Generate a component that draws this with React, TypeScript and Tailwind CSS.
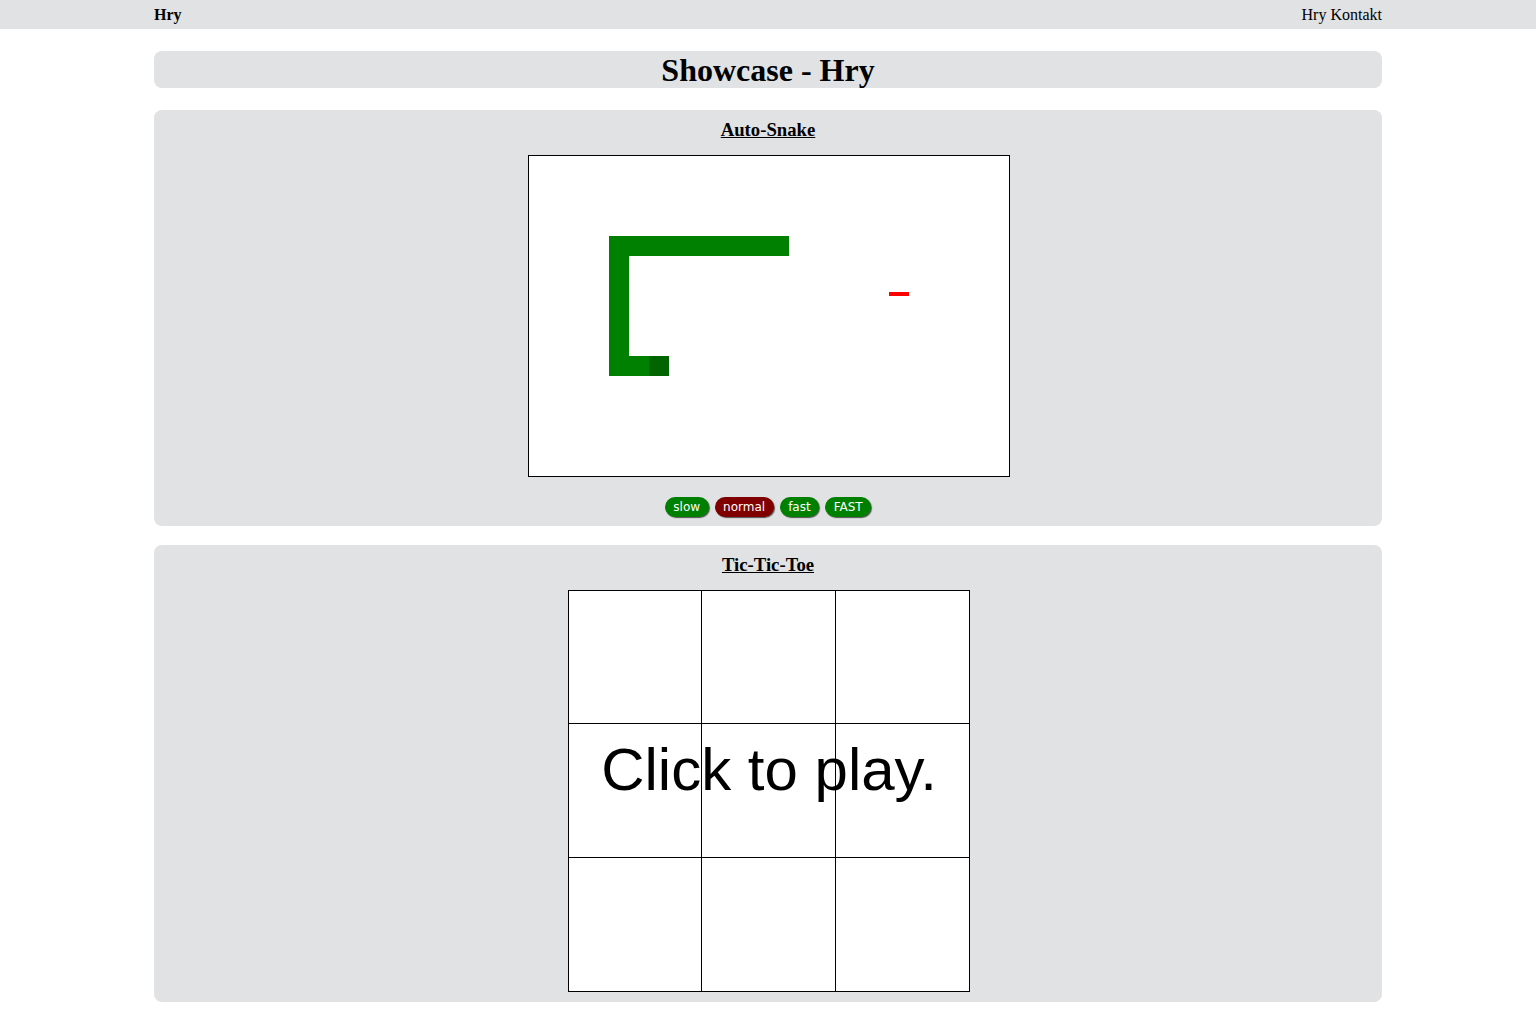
import React from "react";

const serif = { fontFamily: '"Liberation Serif", "Times New Roman", serif' };

const speeds = [
  { label: "slow", active: false },
  { label: "normal", active: true },
  { label: "fast", active: false },
  { label: "FAST", active: false },
];

function SnakeBoard() {
  return (
    <div className="w-[482px] h-[322px] border border-black bg-white">
      <svg width="480" height="320" viewBox="0 0 480 320" className="block">
        <rect x="80" y="80" width="180" height="20" fill="#008000" />
        <rect x="80" y="100" width="20" height="120" fill="#008000" />
        <rect x="100" y="200" width="20" height="20" fill="#008000" />
        <rect x="120" y="200" width="20" height="20" fill="#006400" />
        <rect x="360" y="136" width="20" height="4" fill="#ff0000" />
      </svg>
    </div>
  );
}

function TicTacToe() {
  const cells = Array.from({ length: 9 }, (_, i) => i);
  return (
    <div className="relative w-[402px] h-[402px] border border-black bg-white">
      <div className="grid grid-cols-3 grid-rows-3 w-full h-full">
        {cells.map(i => (
          <div
            key={i}
            className={
              (i % 3 !== 2 ? "border-r border-r-black " : "") +
              (i < 6 ? "border-b border-b-black" : "")
            }
          />
        ))}
      </div>
      <div
        className="absolute left-0 right-0 top-[149px] text-center text-[60px] leading-[60px] text-black whitespace-nowrap"
        style={{ fontFamily: '"Liberation Sans", Arial, sans-serif' }}
      >
        Click to play.
      </div>
    </div>
  );
}

function App() {
  return (
    <div className="min-h-screen bg-white text-black" style={serif}>
      <nav className="h-[29px] bg-[#e1e2e4]">
        <div className="w-[1228px] mx-auto h-full flex items-center justify-between text-[16px]">
          <span className="font-bold">Hry</span>
          <span>Hry Kontakt</span>
        </div>
      </nav>

      <main className="w-[1228px] mx-auto">
        <div className="mt-[22px] h-[37px] rounded-lg bg-[#e1e2e4] flex items-center justify-center">
          <h1 className="text-[32px] font-bold leading-none">Showcase - Hry</h1>
        </div>

        <section className="mt-[22px] rounded-lg bg-[#e1e2e4] pt-[7px] pb-[9px] flex flex-col items-center">
          <h2 className="h-[26px] leading-[26px] text-[18.72px] font-bold underline">Auto-Snake</h2>
          <div className="mt-[12px] ml-[2px]">
            <SnakeBoard />
          </div>
          <div
            className="mt-[20px] flex gap-[6px]"
            style={{ fontFamily: '"DejaVu Sans", Verdana, sans-serif' }}
          >
            {speeds.map(s => (
              <button
                key={s.label}
                className={
                  "h-[20px] px-[8.5px] rounded-full text-[12px] leading-none text-white shadow-[1px_1px_1px_#555] " +
                  (s.active ? "bg-[#800000]" : "bg-[#008000]")
                }
              >
                {s.label}
              </button>
            ))}
          </div>
        </section>

        <section className="mt-[19px] rounded-lg bg-[#e1e2e4] pt-[7px] pb-[10px] flex flex-col items-center">
          <h2 className="h-[26px] leading-[26px] text-[18.72px] font-bold underline">Tic-Tic-Toe</h2>
          <div className="mt-[12px] ml-[2px]">
            <TicTacToe />
          </div>
        </section>
      </main>
    </div>
  );
}

export default App;
